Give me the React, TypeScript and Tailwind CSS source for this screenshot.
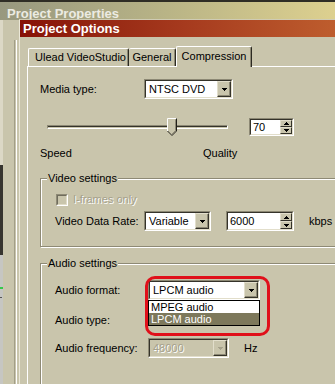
import React from 'react';

function Arrow({ up = false, color = '#000' }: { up?: boolean; color?: string }) {
  return (
    <svg width="5" height="3" viewBox="0 0 5 3" className="block">
      {up ? (
        <path d="M2 0h1v1H2z M1 1h3v1H1z M0 2h5v1H0z" fill={color} />
      ) : (
        <path d="M0 0h5v1H0z M1 1h3v1H1z M2 2h1v1H2z" fill={color} />
      )}
    </svg>
  );
}

function Combo({ w, text, disabled = false }: { w: string; text: string; disabled?: boolean }) {
  return (
    <div className={`${w} flex h-[20px] border border-t-[#8c8874] border-l-[#8c8874] border-b-white border-r-white`}>
      <div
        className={`flex flex-1 border border-t-[#35332a] border-l-[#35332a] border-b-[#e2decb] border-r-[#e2decb] ${
          disabled ? 'bg-[#c9c5ac]' : 'bg-white'
        }`}
      >
        <div
          className={`flex-1 pl-[3px] leading-[16px] ${
            disabled ? 'text-[#a5a18b] [text-shadow:1px_1px_0_#ffffff]' : 'text-black'
          }`}
        >
          {text}
        </div>
        <div className="flex h-[16px] w-[14px] items-center justify-center border border-t-[#e2decb] border-l-[#e2decb] border-b-[#35332a] border-r-[#35332a] bg-[#c9c5ac] shadow-[inset_-1px_-1px_0_#8c8874]">
          <Arrow color={disabled ? '#a5a18b' : '#000'} />
        </div>
      </div>
    </div>
  );
}

function SpinBtn({ up }: { up: boolean }) {
  return (
    <div className="flex flex-1 items-center justify-center border border-t-[#e2decb] border-l-[#e2decb] border-b-[#35332a] border-r-[#35332a] bg-[#c9c5ac]">
      <Arrow up={up} />
    </div>
  );
}

function Spinner({ w, h, text }: { w: string; h: string; text: string }) {
  return (
    <div className={`${w} ${h} flex border border-t-[#8c8874] border-l-[#8c8874] border-b-white border-r-white`}>
      <div className="flex flex-1 border border-t-[#35332a] border-l-[#35332a] border-b-[#e2decb] border-r-[#e2decb] bg-white">
        <div className="flex flex-1 items-center pl-[2px] text-black">{text}</div>
        <div className="flex w-[12px] flex-col">
          <SpinBtn up />
          <SpinBtn up={false} />
        </div>
      </div>
    </div>
  );
}

function Thumb() {
  return (
    <svg width="10" height="18" viewBox="0 0 10 18" className="block">
      <polygon points="0,0 10,0 10,13 5,18 0,13" fill="#c9c5ac" />
      <polyline points="0.5,13 0.5,0.5 9.5,0.5" fill="none" stroke="#ffffff" strokeWidth="1" />
      <polyline points="9.5,0.5 9.5,13 5,17.5 0.5,13" fill="none" stroke="#23211a" strokeWidth="1" />
      <polyline points="8.5,1.5 8.5,12.6 5,16.1" fill="none" stroke="#8c8874" strokeWidth="1" />
    </svg>
  );
}

function Group({ label, h, children }: { label: string; h: string; children: React.ReactNode }) {
  return (
    <div
      className={`relative ${h} w-[320px] border border-[#8e8a75] shadow-[inset_1px_1px_0_#ffffff,1px_1px_0_#ffffff] flex flex-col pl-[14px]`}
    >
      <div className="absolute -top-[7px] left-[6px] bg-[#c9c5ac] px-[1px] leading-[13px] text-black">{label}</div>
      {children}
    </div>
  );
}

export default function App() {
  return (
    <div className="relative h-[384px] w-[335px] overflow-hidden bg-[#c9c5ac] font-['Liberation_Sans',Arial,sans-serif] text-[11px] leading-[13px] text-black">
      {/* Back window: Project Properties */}
      <div className="flex h-full flex-col">
        <div className="h-[2px] bg-[#2f2d25]" />
        <div className="flex h-[18px] items-start bg-gradient-to-r from-[#98987f] via-[#b9b486] to-[#ddd08f] pl-[7px] pt-[3px] text-[13px] font-bold leading-[18px] text-[#ecebe2]">
          Project Properties
        </div>
        <div className="flex flex-1">
          <div className="flex w-[3px] flex-col">
            <div className="h-[145px] bg-[#dcd8c6]" />
            <div className="h-[90px] bg-[#37352f]" />
            <div className="flex flex-1 flex-col bg-[#c6c6c2]">
              <div className="mt-[32px] h-[2px] w-[3px] bg-[#35c84a]" />
              <div className="mt-[8px] h-[1px] w-[2px] bg-[#555555]" />
            </div>
          </div>
          <div className="ml-[11px] mt-[20px] w-[3px] border-l border-r border-l-[#a29e88] border-r-white" />
        </div>
      </div>

      {/* Front window: Project Options */}
      <div className="absolute left-[19px] top-[19px] flex h-[380px] w-[330px] flex-col border-l border-t border-l-[#ebe8d8] border-t-[#cfcbb4] bg-[#c9c5ac]">
        <div className="h-[17px] bg-gradient-to-r from-[#861006] via-[#a63a1e] to-[#c0602f] pl-[3px] text-[13px] font-bold leading-[17px] text-white">
          Project Options
        </div>
        <div className="flex flex-1 flex-col pl-[7px]">
          {/* Tabs */}
          <div className="relative z-10 ml-[1px] mt-[9px] flex items-end">
            <div className="flex h-[18px] w-[101px] items-center justify-center rounded-t-[2px] border-l border-t border-r border-l-white border-t-white border-r-[#2c2a22] pl-[4px] shadow-[inset_-1px_0_0_#8c8874]">
              Ulead VideoStudio
            </div>
            <div className="flex h-[18px] w-[47px] items-center justify-center rounded-t-[2px] border-t border-r border-t-white border-r-[#2c2a22] shadow-[inset_-1px_0_0_#8c8874]">
              General
            </div>
            <div className="-mb-px flex h-[21px] w-[76px] items-start justify-center rounded-t-[2px] border-l border-t border-r border-l-white border-t-white border-r-[#2c2a22] bg-[#c9c5ac] pt-[3px] shadow-[inset_-1px_0_0_#8c8874]">
              Compression
            </div>
          </div>

          {/* Tab page */}
          <div className="flex flex-1 flex-col border-l border-t border-white pl-[12px]">
            <div className="mt-[12px] flex h-[20px] items-center">
              <div className="w-[104px]">Media type:</div>
              <Combo w="w-[89px]" text="NTSC DVD" />
            </div>

            <div className="mt-[19px] flex h-[18px] items-center">
              <div className="relative ml-[7px] flex h-[18px] w-[181px] items-center">
                <div className="h-[4px] w-full border border-t-[#8c8874] border-l-[#8c8874] border-b-white border-r-white">
                  <div className="h-[1px] w-full bg-[#35332a]" />
                </div>
                <div className="absolute left-[120px] top-0">
                  <Thumb />
                </div>
              </div>
              <div className="ml-[21px]">
                <Spinner w="w-[45px]" h="h-[18px]" text="70" />
              </div>
            </div>

            <div className="mt-[11px] flex h-[13px]">
              <div className="w-[163px]">Speed</div>
              <div>Quality</div>
            </div>

            <div className="mt-[18px]">
              <Group label="Video settings" h="h-[69px]">
                <div className="mt-[14px] flex h-[13px] items-center">
                  <div className="ml-[1px] h-[12px] w-[12px] border border-t-[#8e8a76] border-l-[#8e8a76] border-b-white border-r-white">
                    <div className="h-full w-full border border-t-[#6f6c5c] border-l-[#6f6c5c] border-b-[#e0dcc8] border-r-[#e0dcc8]" />
                  </div>
                  <div className="ml-[5px] text-[#a5a18b] [text-shadow:1px_1px_0_#ffffff]">I-frames only</div>
                </div>
                <div className="mt-[5px] flex h-[20px] items-center">
                  <div className="w-[89px]">Video Data Rate:</div>
                  <Combo w="w-[67px]" text="Variable" />
                  <div className="ml-[15px]">
                    <Spinner w="w-[68px]" h="h-[20px]" text="6000" />
                  </div>
                  <div className="ml-[15px]">kbps</div>
                </div>
              </Group>
            </div>

            <div className="mt-[16px]">
              <Group label="Audio settings" h="h-[150px]">
                <div className="mt-[16px] flex h-[20px] items-center">
                  <div className="w-[93px]">Audio format:</div>
                  <Combo w="w-[112px]" text="LPCM audio" />
                </div>
                <div className="mt-[10px] flex h-[20px] items-center">
                  <div className="w-[93px]">Audio type:</div>
                </div>
                <div className="mt-[8px] flex h-[20px] items-center">
                  <div className="w-[93px]">Audio frequency:</div>
                  <Combo w="w-[81px]" text="48000" disabled />
                  <div className="ml-[15px]">Hz</div>
                </div>

                {/* open dropdown list */}
                <div className="absolute left-[107px] top-[36px] flex w-[112px] flex-col border border-black bg-white">
                  <div className="h-[12px] pl-[2px] leading-[12px] text-black">MPEG audio</div>
                  <div className="h-[12px] bg-[#7d785b] pl-[2px] leading-[12px] text-white">LPCM audio</div>
                </div>
                {/* red highlight ring */}
                <div className="absolute left-[104px] top-[12px] h-[60px] w-[125px] rounded-[10px] border-[3px] border-[#e0101a]" />
              </Group>
            </div>
          </div>
        </div>
      </div>
    </div>
  );
}
